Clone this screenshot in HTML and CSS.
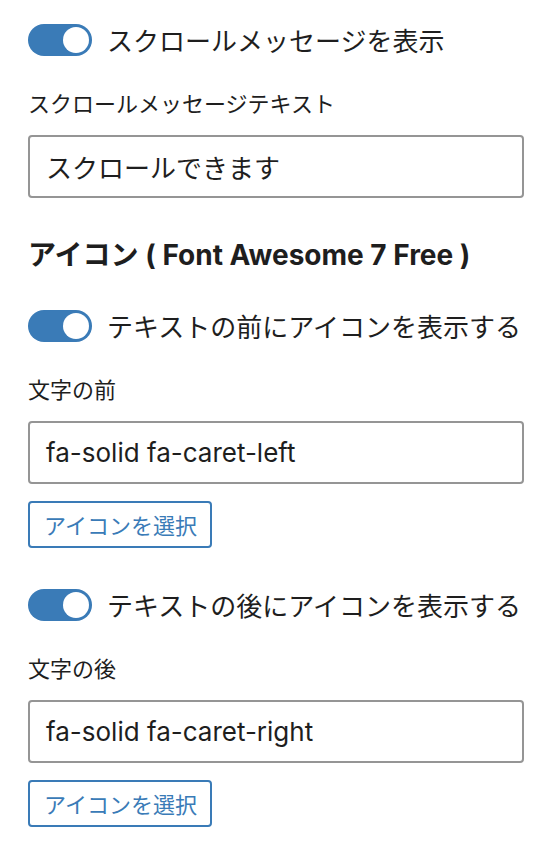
FILE: index.html
```html
<!DOCTYPE html>
<html lang="ja">
<head>
<meta charset="utf-8">
<link rel="stylesheet" href="styles.css">
</head>
<body>
<div class="panel">
  <div class="toggle-row">
    <span class="toggle"><span class="knob"></span></span>
    <span class="toggle-label">スクロールメッセージを表示</span>
  </div>
  <div class="field-label l1">スクロールメッセージテキスト</div>
  <div class="input">スクロールできます</div>

  <h2 class="heading">アイコン ( Font Awesome 7 Free )</h2>

  <div class="toggle-row t2">
    <span class="toggle"><span class="knob"></span></span>
    <span class="toggle-label">テキストの前にアイコンを表示する</span>
  </div>
  <div class="field-label">文字の前</div>
  <div class="input latin">fa-solid fa-caret-left</div>
  <button class="btn">アイコンを選択</button>

  <div class="toggle-row t3">
    <span class="toggle"><span class="knob"></span></span>
    <span class="toggle-label">テキストの後にアイコンを表示する</span>
  </div>
  <div class="field-label">文字の後</div>
  <div class="input latin">fa-solid fa-caret-right</div>
  <button class="btn">アイコンを選択</button>
</div>
</body>
</html>
```

FILE: styles.css
```css
html, body {
  margin: 0;
  padding: 0;
  background: #ffffff;
}
body {
  font-family: "Inter", "Noto Sans CJK JP", sans-serif;
  color: #1e1e1e;
}
.panel {
  width: 496px;
  padding: 24px 0 0 28px;
  display: flex;
  flex-direction: column;
  align-items: flex-start;
}
.toggle-row {
  display: flex;
  align-items: center;
  gap: 15px;
  height: 32px;
}
.toggle-row.t2 { margin-top: 38px; }
.toggle-row.t3 { margin-top: 41px; }
.toggle {
  position: relative;
  width: 64px;
  height: 32px;
  border-radius: 16px;
  background: #3a7bb7;
  flex: none;
}
.knob {
  position: absolute;
  top: 3px;
  right: 3px;
  width: 26px;
  height: 26px;
  border-radius: 50%;
  background: #ffffff;
}
.toggle-label {
  font-family: "Noto Sans CJK JP", sans-serif;
  font-size: 26px;
  line-height: 32px;
  color: #1e1e1e;
  white-space: nowrap;
}
.field-label {
  font-family: "Noto Sans CJK JP", sans-serif;
  font-size: 22px;
  line-height: 28px;
  margin-top: 32px;
  margin-bottom: 19px;
}
.input {
  box-sizing: border-box;
  width: 496px;
  height: 63px;
  border: 2px solid #959595;
  border-radius: 4px;
  padding: 0 16px;
  display: flex;
  align-items: center;
  font-family: "Noto Sans CJK JP", sans-serif;
  font-size: 26px;
  color: #1e1e1e;
}
.input.latin {
  font-family: "Inter", "Noto Sans CJK JP", sans-serif;
  font-size: 26px;
}
.heading {
  margin: 40px 0 0 0;
  font-family: "Inter", "Noto Sans CJK JP", sans-serif;
  font-weight: 700;
  font-size: 28px;
  line-height: 34px;
  color: #1e1e1e;
  white-space: nowrap;
}
.btn {
  box-sizing: border-box;
  margin-top: 17px;
  height: 47px;
  padding: 0 13px 0 14px;
  border: 2px solid #3a7bb7;
  border-radius: 4px;
  background: #ffffff;
  color: #3a7bb7;
  font-family: "Noto Sans CJK JP", sans-serif;
  font-size: 22px;
  line-height: 43px;
}
```
